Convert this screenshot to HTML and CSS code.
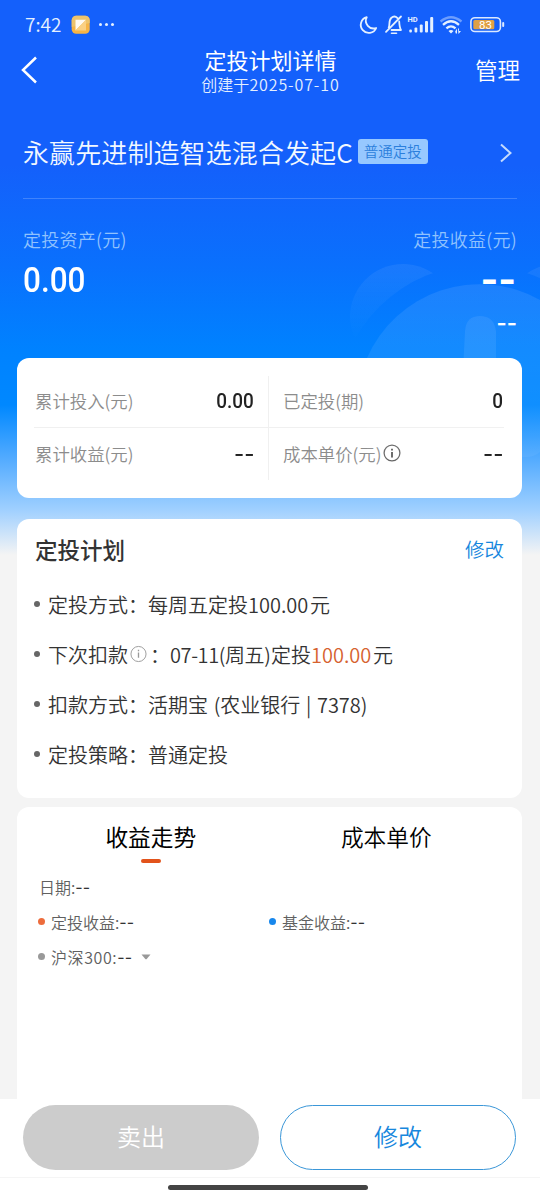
FILE: index.html
```html
<!DOCTYPE html>
<html lang="zh-CN">
<head>
    <meta charset="UTF-8">
    <title>定投计划详情</title>
    <link rel="stylesheet" href="styles.css">
</head>
<body>
<div id="page">
    <svg class="bear" width="200" height="200" viewBox="340 260 200 200">
        <defs>
            <linearGradient id="ear" x1="0" y1="0" x2="0" y2="1">
                <stop offset="0" stop-color="#fff" stop-opacity=".07"/>
                <stop offset=".75" stop-color="#fff" stop-opacity="0"/>
            </linearGradient>
            <linearGradient id="head" x1="0" y1="0" x2="0" y2="1">
                <stop offset="0" stop-color="#fff" stop-opacity=".09"/>
                <stop offset="1" stop-color="#fff" stop-opacity=".05"/>
            </linearGradient>
            <mask id="cut">
                <rect x="340" y="260" width="200" height="200" fill="#fff"/>
                <circle cx="480" cy="407" r="142" fill="#000"/>
            </mask>
        </defs>
        <g mask="url(#cut)">
            <circle cx="403" cy="317" r="53" fill="url(#ear)"/>
            <circle cx="557" cy="317" r="53" fill="url(#ear)"/>
        </g>
        <path d="M367 358A123 123 0 0 1 540 300V452Q534 457 526 457H367Z" fill="url(#head)"/>
        <path d="M463 370L465 331Q466 316 480 316T496 331V370Z" fill="#fff" fill-opacity=".08"/>
    </svg>

    <!--状态栏-->
    <div class="status">
        <span class="time">7:42</span>
        <svg width="20" height="20" viewBox="0 0 20 20">
            <rect x=".7" y=".7" width="18" height="18" rx="4.5" fill="#f6b445"/>
            <path d="M.7 12V5.2A4.5 4.5 0 0 1 5.2.7H14.2A4.5 4.5 0 0 1 18.7 5.2V8Z" fill="#edc36c"/>
            <path d="M4.5 4.8H15L4.5 15.5Z" fill="#fffaf0"/>
            <path d="M15 4.8V15.5H4.5Z" fill="#fad083"/>
        </svg>
        <i class="more"></i>
        <svg class="status-icons" width="150" height="24" viewBox="358 13 150 24">
            <g fill="none" stroke="#e4f0ff" stroke-width="1.8" stroke-linejoin="round" stroke-linecap="round">
                <path d="M366.8 17.2A8 8 0 1 0 376.200 28A7.700 7.700 0 0 1 366.800 17.200Z"/>
                <path d="M388.700 27.500C390 25.500 388.500 20.500 391.200 18Q394.500 15 397.500 18.200M399.200 21.500C399.400 26 399.500 27.500 401 30H391.500M386 31.800L401 16.500"/>
                <path d="M391.500 33.200H396.500" stroke-width="1.600"/>
            </g>
            <g fill="#e4f0ff">
                <rect x="409.300" y="29.500" width="2.600" height="3" rx="1"/>
                <rect x="414.500" y="27.500" width="2.800" height="5" rx="1"/>
                <rect x="419.800" y="24.500" width="2.900" height="8" rx="1"/>
                <rect x="425" y="21" width="3" height="11.500" rx="1"/>
                <rect x="430.200" y="17" width="3" height="15.500" rx="1"/>
            </g>
            <text x="407.500" y="22.300" class="hd">HD</text>
            <g fill="none" stroke="#e4f0ff" stroke-width="2.300">
                <path d="M440.500 21.500Q451 13 461.500 21.500" stroke="#6d9dfd"/>
                <path d="M443 24.800Q451 17.800 459 24.800"/>
                <path d="M446.400 28.400Q451 24.400 455.500 28.400"/>
            </g>
            <path d="M448.500 31Q451 29 453.500 31L451 33.500ZM455.200 31.500L457 28.500V33.500H455.800ZM458 28.500H459V31H461L458.500 34Z" fill="#e4f0ff"/>
            <rect x="470.900" y="17.700" width="29.500" height="13.800" rx="4" fill="none" stroke="#dce9ff" stroke-width="1.600"/>
            <rect x="473.300" y="20" width="21" height="9.300" rx="1.500" fill="#dfa044"/>
            <rect x="502.200" y="22" width="2" height="5" rx="1" fill="#dce9ff"/>
            <text x="479" y="28.800" class="battery">83</text>
        </svg>
    </div>

    <!--标题栏-->
    <div class="nav">
        <svg class="back" width="17" height="28" viewBox="0 0 17 28"><path d="M15 1.500L2 14L15 26.500" fill="none" stroke="#fff" stroke-width="2.500"/></svg>
        <div class="nav-title">
            <h1>定投计划详情</h1>
            <p>创建于<span>2025-07-10</span></p>
        </div>
        <a class="manage">管理</a>
    </div>

    <div class="fund">
        <span class="fund-name">永赢先进制造智选混合发起C</span>
        <span class="tag">普通定投</span>
        <svg width="14" height="20" viewBox="0 0 14 20"><path d="M2 1.500L11.500 10L2 18.500" fill="none" stroke="#c4dafe" stroke-width="2"/></svg>
    </div>

    <div class="asset">
        <div>
            <p>定投资产(元)</p>
            <b class="num">0.00</b>
        </div>
        <div class="right">
            <p>定投收益(元)</p>
            <b class="dash">--</b>
            <span class="dash small">--</span>
        </div>
    </div>

    <div class="card total">
        <div class="cell"><span>累计投入(元)</span><b>0.00</b></div>
        <div class="cell"><span>已定投(期)</span><b>0</b></div>
        <div class="cell"><span>累计收益(元)</span><b class="dash">--</b></div>
        <div class="cell">
            <span>成本单价(元)</span>
            <svg width="18" height="18" viewBox="0 0 18 18"><circle cx="9" cy="9" r="7.900" fill="none" stroke="#666" stroke-width="1.300"/><path d="M9 8V13.500M9 4.800V6.500" stroke="#555" stroke-width="1.800"/></svg>
            <b class="dash">--</b>
        </div>
    </div>

    <!--定投计划-->
    <div class="card plan">
        <div class="plan-head"><h2>定投计划</h2><a>修改</a></div>
        <ul>
            <li><span class="key">定投方式：</span>每周五定投<span class="money">100.00</span>元</li>
            <li><span class="key">下次扣款<svg width="18" height="18" viewBox="0 0 18 18"><circle cx="9" cy="9" r="8" fill="none" stroke="#999" stroke-width="1"/><path d="M9 7.500V13M9 4.500V6" stroke="#999" stroke-width="1.400"/></svg>：</span><span class="date">07-11(周五)</span>定投<em class="money">100.00</em>元</li>
            <li><span class="key">扣款方式：</span>活期宝 (农业银行 | 7378)</li>
            <li><span class="key">定投策略：</span>普通定投</li>
        </ul>
    </div>

    <!--收益走势-->
    <div class="card trend">
        <div class="tabs">
            <span class="on">收益走势</span>
            <span>成本单价</span>
        </div>
        <div class="legend">
            <p>日期:<b class="dash">--</b></p>
            <div class="row">
                <p><i class="orange"></i>定投收益:<b class="dash">--</b></p>
                <p><i class="blue"></i>基金收益:<b class="dash">--</b></p>
            </div>
            <p><i></i><span class="index">沪深300:</span><b class="dash">--</b><svg width="10" height="6" viewBox="0 0 10 6"><path d="M.5.5H9.500L5.500 5.200H4.500Z" fill="#999"/></svg></p>
        </div>
    </div>

    <div class="footer">
        <div class="btns">
            <a class="btn sell">卖出</a>
            <a class="btn edit">修改</a>
        </div>
        <div class="home"></div>
    </div>
</div>
</body>
</html>
```
FILE: styles.css
```css
*{
    margin:0;
    padding:0;
    box-sizing: border-box;
}
body{
    font-family: "Noto Sans CJK SC", sans-serif;
    font-weight: 350;
    color: #333;
}
ul{
    list-style: none;
}
i, em{
    font-style: normal;
}
#page{
    width: 540px;
    height: 1200px;
    position: relative;
    overflow: hidden;
    display: flex;
    flex-direction: column;
    white-space: nowrap;
    background: #f4f4f4 linear-gradient(#1460fb 0, #1460fb 165px, #0a70fd 265px, #0082ff 350px, #0088ff 405px, #55acff 460px, #a0d0ff 510px, #f4f4f4 555px) no-repeat;
}
.bear{
    position: absolute;
    left: 340px;
    top: 260px;
}
.dash{
    display: inline-block;
    font-family: Inter, sans-serif;
}

/*状态栏*/
.status{
    height: 49px;
    flex-shrink: 0;
    padding: 0 32px 0 25px;
    display: flex;
    align-items: center;
    color: #e4f0ff;
}
.time{
    width: 46px;
    font-size: 19px;
    line-height: 26px;
    padding-bottom: 2px;
}
.more{
    width: 3px;
    height: 3px;
    margin-left: 8px;
    border-radius: 50%;
    background: #e4f0ff;
    box-shadow: 6px 0 #e4f0ff, 12px 0 #e4f0ff;
}
.status-icons{
    margin-left: auto;
}
.hd{
    font: bold 7.5px Roboto, sans-serif;
    fill: #e4f0ff;
}
.battery{
    font: 400 11.5px Roboto, sans-serif;
    fill: #fff;
}

/*标题栏*/
.nav{
    height: 55px;
    flex-shrink: 0;
    padding: 0 20px 0 21px;
    display: flex;
    align-items: flex-start;
    justify-content: space-between;
    color: #fff;
}
.back{
    margin-top: 7px;
    margin-right: 28px;
}
.nav-title{
    text-align: center;
}
.nav-title h1{
    font-size: 22px;
    font-weight: 400;
    line-height: 20px;
}
.nav-title p{
    font-size: 16px;
    line-height: 30px;
    color: #e4efff;
}
.nav-title p span{
    letter-spacing: .9px;
}
.manage{
    font-size: 22.5px;
    line-height: 40px;
}

.fund{
    height: 95px;
    flex-shrink: 0;
    margin: 0 23px;
    padding: 0 4px 0 0;
    display: flex;
    align-items: center;
    border-bottom: 1px solid #3f83fc;
}
.fund-name{
    font-size: 26px;
    letter-spacing: .1px;
    color: #f2f8ff;
}
.tag{
    width: 70px;
    height: 25px;
    margin: 1px 0 0 5px;
    border-radius: 3px;
    background: #97c8ff;
    color: #2b7fdc;
    font-size: 14.5px;
    line-height: 24px;
    text-align: center;
}
.fund svg{
    margin: 3px 0 0 auto;
}

.asset{
    height: 159px;
    flex-shrink: 0;
    padding: 27px 23px 0;
    display: flex;
    justify-content: space-between;
    color: #fff;
}
.asset p{
    font-size: 18px;
    line-height: 26px;
    letter-spacing: .25px;
    color: #90c2fe;
}
.asset .num{
    display: block;
    width: 66px;
    font: 500 35px/57px Roboto, sans-serif;
    transform: scaleX(.9);
    transform-origin: left;
}
.right{
    display: flex;
    flex-direction: column;
    align-items: flex-end;
}
.right b{
    margin-right: 1px;
    font-size: 38px;
    line-height: 55px;
}
.right .small{
    font-size: 22px;
    line-height: 32px;
    font-weight: 600;
}

.card{
    width: 505px;
    flex-shrink: 0;
    margin-left: 17px;
    border-radius: 12px;
    background: #fff;
}
.total{
    height: 140px;
    padding: 18px 18px 17px 17px;
    display: grid;
    grid-template-columns: 234px 236px;
    grid-template-rows: 52px 52px;
}
.cell{
    padding: 0 14px 2px 1px;
    display: flex;
    align-items: center;
    font-size: 17.4px;
    color: #8c8c8c;
}
.cell:nth-child(even){
    padding: 0 1px 2px 14px;
    border-left: 1px solid #f0f0f0;
}
.cell:nth-child(-n+2){
    border-bottom: 1px solid #f0f0f0;
}
.cell svg{
    margin-left: 2px;
}
.cell b{
    margin-left: auto;
    font: 500 21px Roboto, sans-serif;
    color: #222;
    transform: scaleX(.9);
    transform-origin: right;
}
.cell .dash{
    font: 500 21px Inter, sans-serif;
    transform: scaleX(1.05);
}

.plan{
    height: 279px;
    margin-top: 21px;
    padding: 9px 18px;
}
.plan-head{
    height: 41px;
    display: flex;
    justify-content: space-between;
    align-items: center;
}
.plan-head h2{
    font-size: 22.5px;
    font-weight: 500;
}
.plan-head a{
    font-size: 19.5px;
    color: #1787dd;
}
.plan ul{
    padding-top: 10px;
}
.plan li{
    height: 50px;
    display: flex;
    align-items: center;
    font-size: 20px;
    word-spacing: 1.2px;
}
.plan li::before{
    content: "";
    width: 6px;
    height: 6px;
    margin: 0 8px 0 -1px;
    border-radius: 50%;
    background: #666;
}
.key{
    width: 100px;
    display: flex;
    align-items: center;
}
.key svg{
    margin: 0 3px 0 2px;
}
li:nth-child(2) .key{
    width: 122px;
}
.date{
    width: 101px;
    letter-spacing: -.4px;
}
.money{
    width: 62px;
}
.plan em{
    color: #d6622f;
}

.trend{
    height: 400px;
    margin-top: 9px;
}
.tabs{
    height: 62px;
    padding: 0 18px 0 16px;
    display: grid;
    grid-template-columns: 1fr 1fr;
    text-align: center;
    font-size: 22.7px;
    line-height: 60px;
    color: #000;
}
.tabs .on{
    font-weight: 400;
}
.on::after{
    content: "";
    display: block;
    width: 20px;
    height: 4px;
    margin: -8px auto 0;
    border-radius: 2px;
    background: #e2531b;
}
.legend{
    padding: 0 22px;
    font-size: 16px;
    color: #606060;
}
.legend p{
    height: 35px;
    display: flex;
    align-items: center;
}
.legend .row{
    display: grid;
    grid-template-columns: 231px 1fr;
}
.legend i{
    width: 7px;
    height: 7px;
    margin: 0 6px 0 -1px;
    border-radius: 50%;
    background: #999;
}
.legend .orange{
    background: #ed6c3c;
}
.legend .blue{
    background: #1787ec;
}
.index{
    letter-spacing: .6px;
}
.legend b{
    color: #333;
    font-weight: 400;
}
.legend svg{
    margin-left: 9px;
}

/*底部按钮*/
.footer{
    position: absolute;
    left: 0;
    bottom: 0;
    width: 100%;
    height: 101px;
    background: #fff;
}
.btns{
    height: 79px;
    padding: 6px 24px 0 23px;
    display: flex;
    justify-content: space-between;
    border-bottom: 1px solid #f5f5f5;
}
.btn{
    width: 236px;
    height: 65px;
    border-radius: 33px;
    font-size: 24px;
    line-height: 62px;
    text-align: center;
}
.sell{
    background: #ccc;
    color: #fff;
}
.edit{
    border: 1px solid #3b97d8;
    color: #1787dd;
    line-height: 60px;
}
.home{
    width: 200px;
    height: 5px;
    margin: 7px 0 0 168px;
    border-radius: 3px;
    background: #444;
}
```
